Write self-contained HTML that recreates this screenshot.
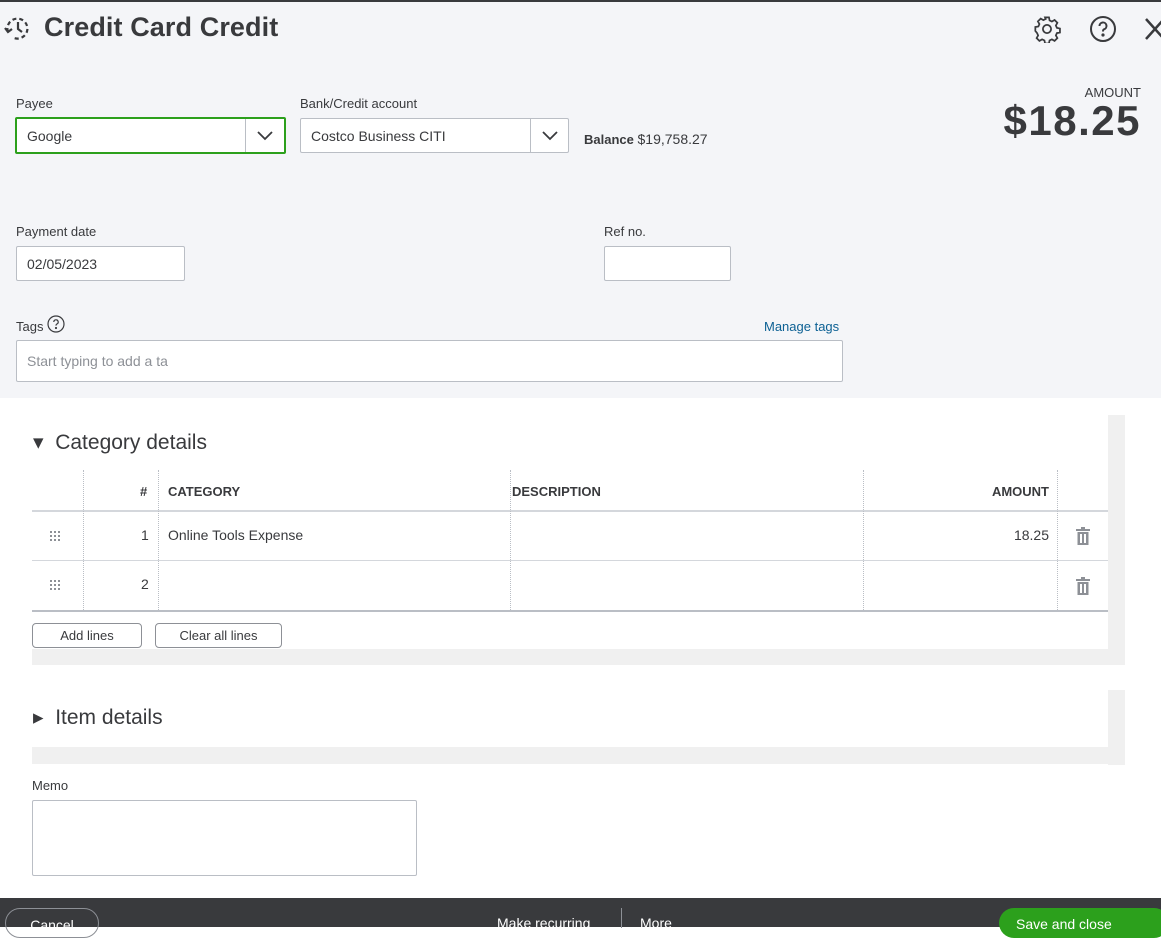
<!DOCTYPE html>
<html><head><style>
*{box-sizing:border-box;margin:0;padding:0}
body{width:1161px;height:927px;overflow:hidden;font-family:"Liberation Sans",sans-serif;color:#393a3d;background:#fff;position:relative}
.a{position:absolute}
.hdr{left:0;top:0;width:1161px;height:398px;background:#f4f5f8;border-top:2px solid #393a3d}
.lbl{font-size:13px;color:#393a3d}
.inp{background:#fff;border:1px solid #babec5;border-radius:2px;font-size:14px;padding-left:10px;display:flex;align-items:center}
.dd{position:absolute;right:0;top:0;bottom:0;width:38px;border-left:1px solid #babec5;display:flex;align-items:center;justify-content:center}
.th{font-size:13px;font-weight:bold;color:#393a3d}
.btn{border:1px solid #8d9096;border-radius:4px;background:#fff;font-size:13px;display:flex;align-items:center;justify-content:center}
</style></head><body>
<div class="a hdr"></div>
<svg class="a" style="left:3px;top:14px" width="30" height="30" viewBox="0 0 30 30" fill="none" stroke="#393a3d" stroke-width="2.2"><path d="M5 18 A10 10 0 1 1 11 24" stroke-dasharray="4 3"/><path d="M15 8v7l4 3"/><path d="M2 14l3 4 4-3"/></svg>
<div class="a" style="left:44px;top:12px;font-size:27px;font-weight:bold;color:#393a3d;letter-spacing:0.1px">Credit Card Credit</div>
<svg class="a" style="left:1033px;top:15px" width="28" height="28" viewBox="0 0 24 24" fill="none" stroke="#393a3d" stroke-width="1.5"><circle cx="12" cy="12" r="3.5"/><path d="M10.3 2h3.4l.5 2.6 2 1 2.3-1.3 2.4 2.4-1.3 2.3.9 2 2.6.6v3.4l-2.6.5-.9 2 1.3 2.3-2.4 2.4-2.3-1.3-2 .9-.5 2.6h-3.4l-.5-2.6-2-.9-2.3 1.3-2.4-2.4 1.3-2.3-.9-2L2 13.7v-3.4l2.6-.5.9-2-1.3-2.3 2.4-2.4 2.3 1.3 2-1z"/></svg>
<svg class="a" style="left:1089px;top:15px" width="28" height="28" viewBox="0 0 28 28" fill="none" stroke="#393a3d" stroke-width="2"><circle cx="14" cy="14" r="12"/><path d="M10.5 11a3.5 3.5 0 1 1 4.5 3.3c-1 .4-1 1-1 2.2"/><circle cx="14" cy="20" r=".6" fill="#393a3d"/></svg>
<svg class="a" style="left:1144px;top:17px" width="20" height="24" viewBox="0 0 20 24" stroke="#393a3d" stroke-width="2.5"><path d="M2 2l18 20M2 22L20 2"/></svg>

<div class="a lbl" style="left:16px;top:96px">Payee</div>
<div class="a inp" style="left:15px;top:117px;width:271px;height:37px;border:2px solid #2ca01c">Google<div class="dd" style="width:39px;border-color:#babec5"><svg width="16" height="10"><path d="M1 1l7 7 7-7" fill="none" stroke="#393a3d" stroke-width="1.8"/></svg></div></div>
<div class="a lbl" style="left:300px;top:96px">Bank/Credit account</div>
<div class="a inp" style="left:300px;top:118px;width:269px;height:35px">Costco Business CITI<div class="dd"><svg width="16" height="10"><path d="M1 1l7 7 7-7" fill="none" stroke="#393a3d" stroke-width="1.8"/></svg></div></div>
<div class="a" style="left:584px;top:131px;font-size:13px"><b style="font-weight:600">Balance</b> <span style="font-size:14px">$19,758.27</span></div>
<div class="a" style="right:20px;top:85px;font-size:13px">AMOUNT</div>
<div class="a" style="right:20px;top:97px;font-size:42px;font-weight:bold;letter-spacing:1.5px">$18.25</div>

<div class="a lbl" style="left:16px;top:224px">Payment date</div>
<div class="a inp" style="left:16px;top:246px;width:169px;height:35px">02/05/2023</div>
<div class="a lbl" style="left:604px;top:224px">Ref no.</div>
<div class="a inp" style="left:604px;top:246px;width:127px;height:35px"></div>
<div class="a lbl" style="left:16px;top:319px">Tags</div>
<svg class="a" style="left:47px;top:315px" width="18" height="18" viewBox="0 0 18 18" fill="none" stroke="#393a3d" stroke-width="1.2"><circle cx="9" cy="9" r="8"/><path d="M6.8 7a2.2 2.2 0 1 1 2.9 2.1c-.6.3-.7.7-.7 1.5"/><circle cx="9" cy="13" r=".5" fill="#393a3d"/></svg>
<div class="a" style="left:764px;top:319px;font-size:13px;color:#0d6194">Manage tags</div>
<div class="a inp" style="left:16px;top:340px;width:827px;height:42px;color:#8d9096">Start typing to add a ta</div>

<div class="a" style="left:33px;top:430px;font-size:21px">▾&nbsp; Category details</div>
<div class="a" style="left:1108px;top:415px;width:17px;height:250px;background:#f0f0f0"></div>
<div class="a" style="left:32px;top:649px;width:1093px;height:16px;background:#f0f0f0"></div>
<div class="a" style="left:32px;top:470px;width:1076px;height:141px">
 <div class="a" style="left:0;top:40px;width:1076px;height:2px;background:#d4d7dc"></div>
 <div class="a" style="left:0;top:90px;width:1076px;height:1px;background:#d4d7dc"></div>
 <div class="a" style="left:0;top:140px;width:1076px;height:2px;background:#babec5"></div>
 <div class="a" style="left:51px;top:0;height:140px;border-left:1px dotted #babec5"></div>
 <div class="a" style="left:126px;top:0;height:140px;border-left:1px dotted #babec5"></div>
 <div class="a" style="left:478px;top:0;height:140px;border-left:1px dotted #babec5"></div>
 <div class="a" style="left:831px;top:0;height:140px;border-left:1px dotted #babec5"></div>
 <div class="a" style="left:1025px;top:0;height:140px;border-left:1px dotted #babec5"></div>
 <div class="a th" style="left:108px;top:14px">#</div>
 <div class="a th" style="left:136px;top:14px">CATEGORY</div>
 <div class="a th" style="left:480px;top:14px">DESCRIPTION</div>
 <div class="a th" style="right:59px;top:14px">AMOUNT</div>
 <svg class="a" style="left:18px;top:61px" width="12" height="12" fill="#8d9096"><rect x="0" y="0" width="2" height="2"/><rect x="4" y="0" width="2" height="2"/><rect x="8" y="0" width="2" height="2"/><rect x="0" y="4" width="2" height="2"/><rect x="4" y="4" width="2" height="2"/><rect x="8" y="4" width="2" height="2"/><rect x="0" y="8" width="2" height="2"/><rect x="4" y="8" width="2" height="2"/><rect x="8" y="8" width="2" height="2"/></svg>
 <svg class="a" style="left:18px;top:110px" width="12" height="12" fill="#8d9096"><rect x="0" y="0" width="2" height="2"/><rect x="4" y="0" width="2" height="2"/><rect x="8" y="0" width="2" height="2"/><rect x="0" y="4" width="2" height="2"/><rect x="4" y="4" width="2" height="2"/><rect x="8" y="4" width="2" height="2"/><rect x="0" y="8" width="2" height="2"/><rect x="4" y="8" width="2" height="2"/><rect x="8" y="8" width="2" height="2"/></svg>
 <div class="a" style="left:109px;top:57px;font-size:14px">1</div>
 <div class="a" style="left:109px;top:106px;font-size:14px">2</div>
 <div class="a" style="left:136px;top:57px;font-size:14px">Online Tools Expense</div>
 <div class="a" style="right:59px;top:57px;font-size:14px">18.25</div>
 <svg class="a" style="left:1044px;top:57px" width="14" height="18" viewBox="0 0 14 18" fill="#8d9096"><rect x="0" y="2" width="14" height="2"/><rect x="5" y="0" width="4" height="2"/><path d="M1.5 5h11v13h-11z M4 7v9h2V7z M8 7v9h2V7z" fill-rule="evenodd"/></svg>
 <svg class="a" style="left:1044px;top:107px" width="14" height="18" viewBox="0 0 14 18" fill="#8d9096"><rect x="0" y="2" width="14" height="2"/><rect x="5" y="0" width="4" height="2"/><path d="M1.5 5h11v13h-11z M4 7v9h2V7z M8 7v9h2V7z" fill-rule="evenodd"/></svg>
</div>
<div class="a btn" style="left:32px;top:623px;width:110px;height:25px">Add lines</div>
<div class="a btn" style="left:155px;top:623px;width:127px;height:25px">Clear all lines</div>

<div class="a" style="left:33px;top:705px;font-size:21px">▸&nbsp; Item details</div>
<div class="a" style="left:1108px;top:690px;width:17px;height:75px;background:#f0f0f0"></div>
<div class="a" style="left:32px;top:747px;width:1093px;height:17px;background:#f0f0f0"></div>

<div class="a lbl" style="left:32px;top:778px">Memo</div>
<div class="a inp" style="left:32px;top:800px;width:385px;height:76px"></div>

<div class="a" style="left:0;top:898px;width:1161px;height:29px;background:#393a3d"></div>
<div class="a" style="left:5px;top:908px;width:94px;height:30px;border:1px solid #8d9096;border-radius:16px;color:#fff;font-size:14px;text-align:center;padding-top:8px">Cancel</div>
<div class="a" style="left:497px;top:915px;color:#fff;font-size:14px">Make recurring</div>
<div class="a" style="left:621px;top:908px;width:1px;height:20px;background:#8d9096"></div>
<div class="a" style="left:640px;top:915px;color:#fff;font-size:14px">More</div>
<div class="a" style="left:999px;top:908px;width:170px;height:30px;background:#2ca01c;border-radius:16px;color:#fff;font-size:14px;padding:8px 0 0 17px">Save and close</div>
</body></html>
